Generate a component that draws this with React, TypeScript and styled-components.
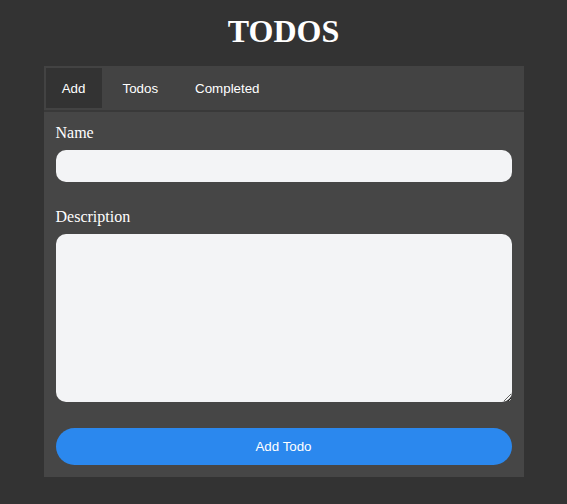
import React, { useState } from "react";
import styled, { createGlobalStyle } from "styled-components";

const Global = createGlobalStyle`
  html, body { margin: 0; padding: 0; background: #333333; }
  body { font-family: "Liberation Serif", "Times New Roman", serif; color: #ffffff; }
  * { box-sizing: border-box; }
`;

const Page = styled.div`
  display: flex;
  flex-direction: column;
  align-items: center;
  padding-top: 13px;
  min-height: 504px;
`;

const Title = styled.h1`
  margin: 0 0 16px;
  font-family: "Liberation Serif", "Times New Roman", serif;
  font-size: 32px;
  font-weight: 700;
  line-height: 37px;
  color: #ffffff;
`;

const Card = styled.div`
  width: 480px;
  display: flex;
  flex-direction: column;
`;

const TabList = styled.div`
  display: flex;
  gap: 5px;
  padding: 2px;
  background: #434343;
  border-bottom: 2px solid #393939;
`;

const Tab = styled.button<{ $active: boolean }>`
  height: 40px;
  min-width: 56px;
  padding: 0 16px;
  border: none;
  background: ${(p) => (p.$active ? "#333333" : "transparent")};
  color: #ffffff;
  font-family: "Liberation Sans", Arial, sans-serif;
  font-size: 13.333px;
  cursor: pointer;
`;

const Panel = styled.form`
  display: flex;
  flex-direction: column;
  padding: 12px;
  background: #464646;
`;

const Field = styled.div`
  display: flex;
  flex-direction: column;
  gap: 8px;
  margin-bottom: 26px;
`;

const Label = styled.label`
  font-size: 16px;
  line-height: 18px;
  color: #ffffff;
`;

const Input = styled.input`
  height: 32px;
  border: none;
  border-radius: 10px;
  background: #f3f4f6;
  padding: 0 10px;
  outline: none;
`;

const TextArea = styled.textarea`
  height: 168px;
  border: none;
  border-radius: 10px;
  background: #f3f4f6;
  padding: 8px 10px;
  outline: none;
  resize: vertical;
  display: block;
`;

const Submit = styled.button`
  height: 37px;
  border: none;
  border-radius: 999px;
  background: #2b88ee;
  color: #ffffff;
  font-family: "Liberation Sans", Arial, sans-serif;
  font-size: 13.333px;
  cursor: pointer;
`;

export default function App() {
  const [tab, setTab] = useState("Add");
  return (
    <>
      <Global />
      <Page>
        <Title>TODOS</Title>
        <Card>
          <TabList>
            {["Add", "Todos", "Completed"].map((t) => (
              <Tab key={t} $active={tab === t} onClick={() => setTab(t)}>
                {t}
              </Tab>
            ))}
          </TabList>
          <Panel onSubmit={(e) => e.preventDefault()}>
            <Field>
              <Label htmlFor="name">Name</Label>
              <Input id="name" />
            </Field>
            <Field>
              <Label htmlFor="desc">Description</Label>
              <TextArea id="desc" />
            </Field>
            <Submit type="submit">Add Todo</Submit>
          </Panel>
        </Card>
      </Page>
    </>
  );
}
